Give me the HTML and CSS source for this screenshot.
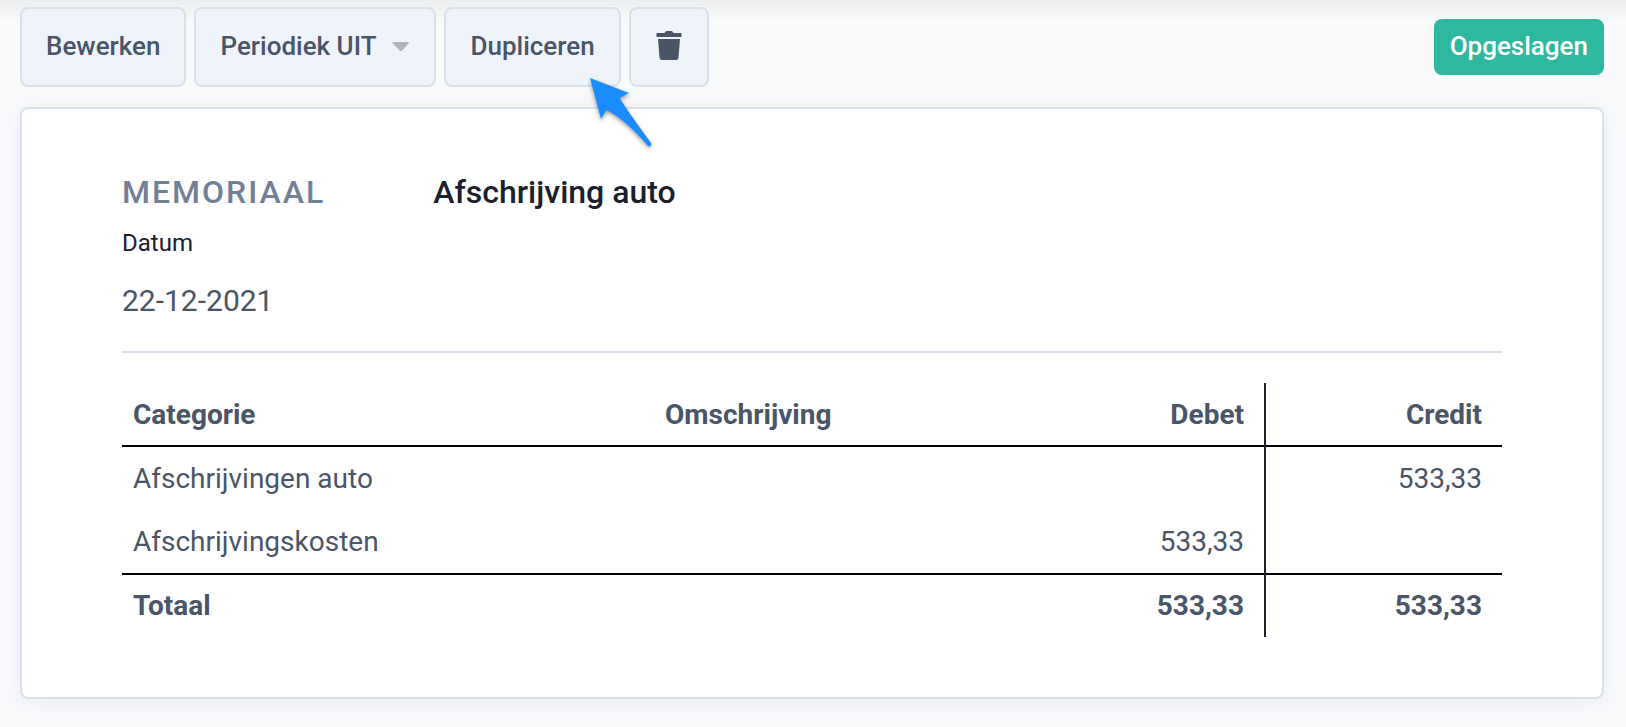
FILE: index.html
```html
<!DOCTYPE html>
<html lang="nl">
    <head>
        <meta charset="UTF-8">
        <meta name="viewport" content="width=device-width, initial-scale=1.0">

        <title>Memoriaal - Afschrijving auto</title>

        <link rel="stylesheet" href="styles.css">
    </head>

    <body>
        <div class="toolbar">
            <button type="button" class="btn">Bewerken</button>
            <button type="button" class="btn">
                Periodiek UIT
                <svg class="caret" width="18" height="10" viewBox="0 0 18 10" aria-hidden="true">
                    <path d="M1.500 0h14.500q1.500 0 .5 1.400l-6.300 7.200q-1.200 1.200-2.400 0L.8 1.400Q0 0 1.500 0z"/>
                </svg>
            </button>
            <div class="pointed">
                <button type="button" class="btn">Dupliceren</button>
                <svg class="arrow" width="66" height="74" viewBox="0 0 66 74" aria-hidden="true">
                    <path d="M2 2L41 17 31.500 22Q43 40 63 67Q64 70 60.500 70.500Q38 44 18.500 34L13 43z"/>
                </svg>
            </div>
            <button type="button" class="btn" aria-label="Verwijderen">
                <svg class="trash" width="28" height="32" viewBox="0 0 28 32" aria-hidden="true">
                    <path d="M1.500 3h8l1-1.500q.3-.5 1-.5h5q.7 0 1 .5l1 1.500h8v4h-25z"/>
                    <path d="M3 9h22l-1.500 18.500q-.3 2.500-2.500 2.500H7q-2.200 0-2.500-2.500z"/>
                </svg>
            </button>
            <span class="saved">Opgeslagen</span>
        </div>

        <main class="card">
            <div class="heading">
                <span class="type">MEMORIAAL</span>
                <h1>Afschrijving auto</h1>
            </div>
            <dl class="date">
                <dt>Datum</dt>
                <dd>22-12-2021</dd>
            </dl>

            <table>
                <thead>
                    <tr>
                        <th class="category">Categorie</th>
                        <th>Omschrijving</th>
                        <th class="amount debit">Debet</th>
                        <th class="amount credit">Credit</th>
                    </tr>
                </thead>
                <tbody>
                    <tr>
                        <td>Afschrijvingen auto</td>
                        <td></td>
                        <td class="amount debit"></td>
                        <td class="amount">533,33</td>
                    </tr>
                    <tr>
                        <td>Afschrijvingskosten</td>
                        <td></td>
                        <td class="amount debit">533,33</td>
                        <td class="amount"></td>
                    </tr>
                </tbody>
                <tfoot>
                    <tr>
                        <th>Totaal</th>
                        <td></td>
                        <td class="amount debit">533,33</td>
                        <td class="amount">533,33</td>
                    </tr>
                </tfoot>
            </table>
        </main>
    </body>
</html>
```
FILE: styles.css
```css
*{
    box-sizing: border-box;
}
body{
    margin: 0;
    padding: 7px 22px 28px 20px;
    font-family: Roboto, sans-serif;
    color: #4a5568;
    background: linear-gradient(#eceef0, #f9fafc 24px) no-repeat #f9fafc;
}
.toolbar{
    display: flex;
    align-items: center;
    gap: 8px;
    margin-bottom: 20px;
}
.btn{
    display: flex;
    align-items: center;
    gap: 16px;
    height: 80px;
    padding: 0 24px 2px;
    border: 2px solid #d9e2ec;
    border-radius: 8px;
    background-color: #eff3fa;
    color: #4a5568;
    font-family: inherit;
    font-size: 26px;
    font-weight: 500;
    white-space: nowrap;
    cursor: pointer;
}
.btn:hover{
    background-color: #e6ecf5;
}
.caret{
    margin-top: 2px;
    fill: #aeb5c1;
}
.trash{
    fill: #4a5568;
}
.pointed{
    position: relative;
}
/* arrow lies over the corner of the button */
.arrow{
    position: absolute;
    left: 144px;
    top: 69px;
    fill: #1a8cff;
    filter: drop-shadow(0 2px 2px rgba(0, 0, 0, 0.4));
    pointer-events: none;
}
.saved{
    margin-left: auto;
    padding: 0 16px 2px;
    border-radius: 8px;
    background-color: #2db89f;
    color: white;
    font-size: 26px;
    font-weight: 500;
    line-height: 54px;
}
.card{
    padding: 60px 100px;
    border: 2px solid #d9e2ec;
    border-radius: 8px;
    background-color: white;
    box-shadow: 0 2px 24px rgba(50, 60, 90, 0.08);
}
.heading{
    display: flex;
    align-items: center;
    gap: 108px;
    line-height: 46px;
}
.type{
    color: #718096;
    font-size: 32px;
    font-weight: 500;
    letter-spacing: 2px;
}
h1{
    margin: 0;
    color: #1a202c;
    font-size: 32px;
    font-weight: 500;
}
.date{
    margin: 0;
    padding-bottom: 20px;
    border-bottom: 2px solid #d9e2ec;
}
dt{
    color: #1a202c;
    font-size: 24px;
    line-height: 56px;
}
dd{
    margin: 0;
    font-size: 30px;
    line-height: 60px;
}
table{
    width: 100%;
    margin-top: 30px;
    border-collapse: collapse;
    table-layout: fixed;
    font-size: 28px;
    line-height: 42px;
}
th, td{
    height: 63px;
    padding: 0 11px;
    text-align: left;
}
thead th{
    padding-top: 2px;
}
tbody td{
    height: 64px;
}
thead tr, tbody tr:last-child{
    border-bottom: 2px solid black;
}
tfoot{
    font-weight: bold;
}
.category{
    width: 532px;
}
.credit{
    width: 237px;
}
.amount{
    padding-right: 20px;
    text-align: right;
}
.debit{
    border-right: 2px solid #1a202c;
}
```
